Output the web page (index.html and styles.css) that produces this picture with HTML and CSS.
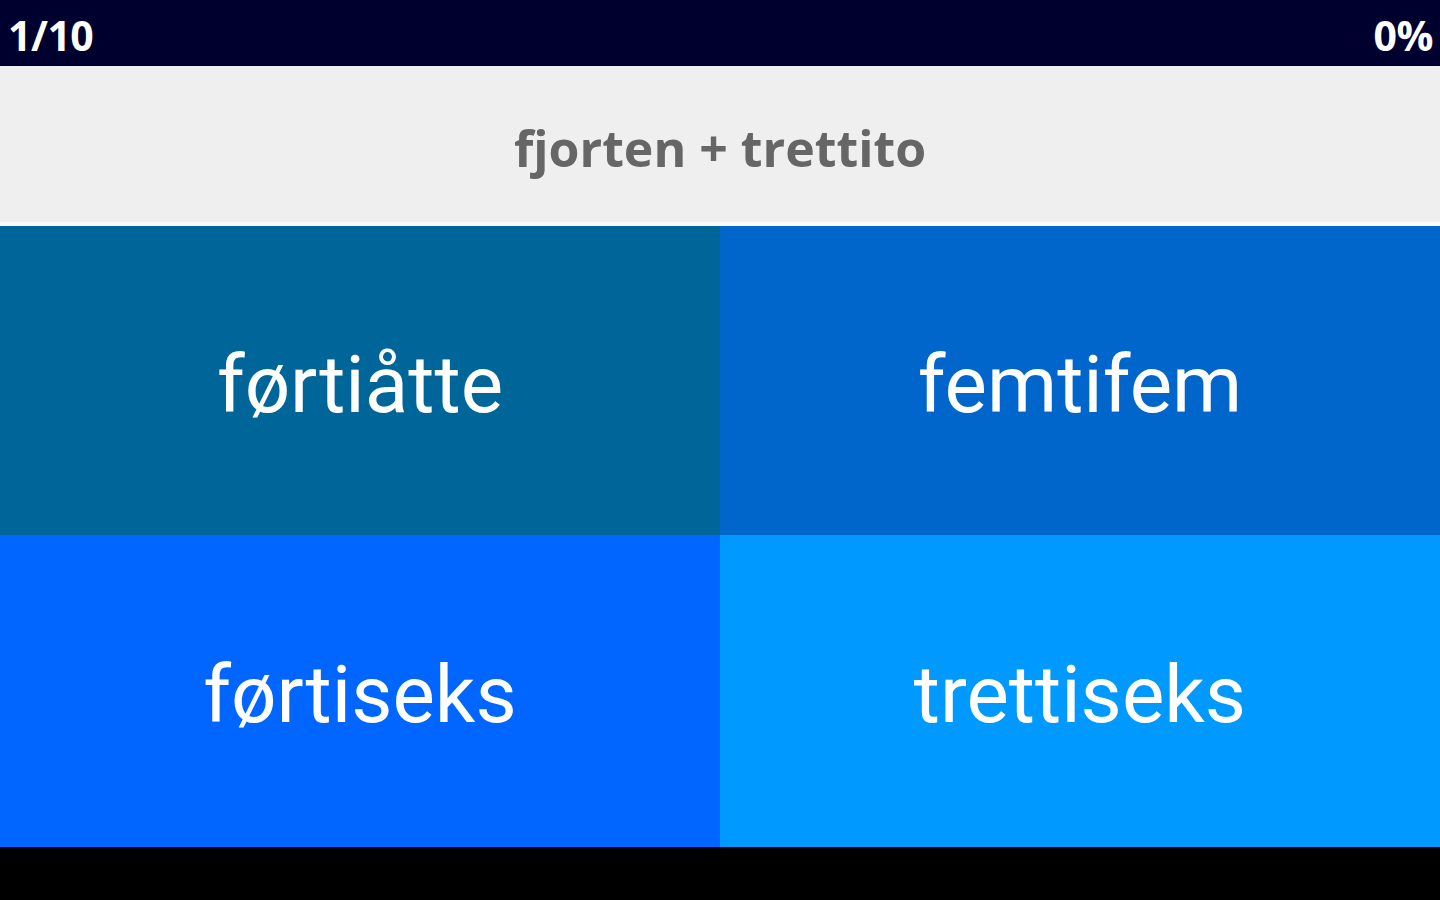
FILE: index.html
```html
<!DOCTYPE html>
<html>
<head>
<meta charset="utf-8">
<link rel="stylesheet" href="styles.css">
</head>
<body>
<div class="app">
  <header class="status">
    <span class="count">1/10</span>
    <span class="pct">0%</span>
  </header>
  <section class="question">fjorten + trettito</section>
  <main class="grid">
    <div class="tile t1">førtiåtte</div>
    <div class="tile t2">femtifem</div>
    <div class="tile t3">førtiseks</div>
    <div class="tile t4">trettiseks</div>
  </main>
  <footer class="navbar"></footer>
</div>
</body>
</html>
```
FILE: styles.css
```css
html, body {
  margin: 0;
  padding: 0;
  width: 1440px;
  height: 900px;
  overflow: hidden;
  background: #000;
}
.app {
  display: flex;
  flex-direction: column;
  width: 1440px;
  height: 900px;
}
.status {
  height: 66px;
  flex: none;
  background: #00002e;
  color: #fff;
  display: flex;
  justify-content: space-between;
  align-items: center;
  padding: 4px 7px 0 8px;
  box-sizing: border-box;
  font-family: "Open Sans", "DejaVu Sans", sans-serif;
  font-weight: 700;
  font-size: 41px;
  letter-spacing: -0.5px;
}
.question {
  height: 160px;
  flex: none;
  background: #efefef;
  border-bottom: 4px solid #fbfbfb;
  display: flex;
  align-items: center;
  justify-content: center;
  font-family: "Open Sans", "DejaVu Sans", sans-serif;
  font-weight: 700;
  font-size: 50px;
  color: #666;
  padding-top: 8px;
  box-sizing: border-box;
}
.grid {
  height: 621px;
  flex: none;
  display: grid;
  grid-template-columns: 720px 720px;
  grid-template-rows: 309px 312px;
}
.tile {
  display: flex;
  align-items: center;
  justify-content: center;
  color: #fff;
  font-family: Roboto, "Noto Sans", sans-serif;
  font-size: 80px;
  padding-top: 8px;
  box-sizing: border-box;
}
.t1 { background: #006699; }
.t2 { background: #0066cc; }
.t3 { background: #0066ff; }
.t4 { background: #0099ff; }
.navbar {
  flex: 1;
  background: #000;
}
```
